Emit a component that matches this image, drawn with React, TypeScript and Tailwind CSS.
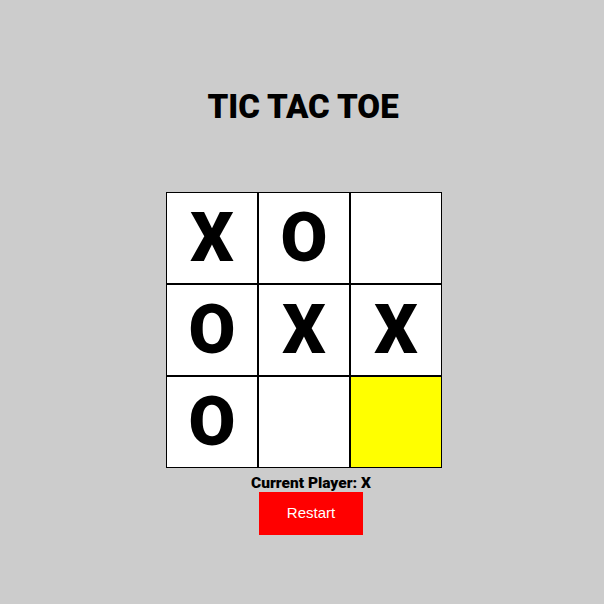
const board = ["X", "O", "", "O", "X", "X", "O", "", ""];

export default function App() {
    return (
        <div className="w-[604px] h-[604px] bg-[#cccccc] flex flex-col items-center font-['Roboto',Arial,sans-serif]">
            <h1 className="mt-[88px] ml-[2px] text-[33px] leading-[37px] font-black text-black">TIC TAC TOE</h1>
            <div className="mt-[67px] ml-[4px] grid grid-cols-[repeat(3,92px)]">
                {board.map((v, i) => (
                    <div
                        key={i}
                        className={`w-[92px] h-[92px] border border-black flex items-center justify-center text-[68px] font-black ${i === 8 ? "bg-[#ffff00]" : "bg-white"}`}
                    >
                        {v}
                    </div>
                ))}
            </div>
            <p className="mt-[6px] ml-[18px] text-[15.5px] leading-[18px] font-black text-black">Current Player: X</p>
            <button className="ml-[18px] w-[104px] h-[43px] bg-[#ff0000] text-white text-[15px] font-['Liberation_Sans',Arial,sans-serif]">Restart</button>
        </div>
    );
}
